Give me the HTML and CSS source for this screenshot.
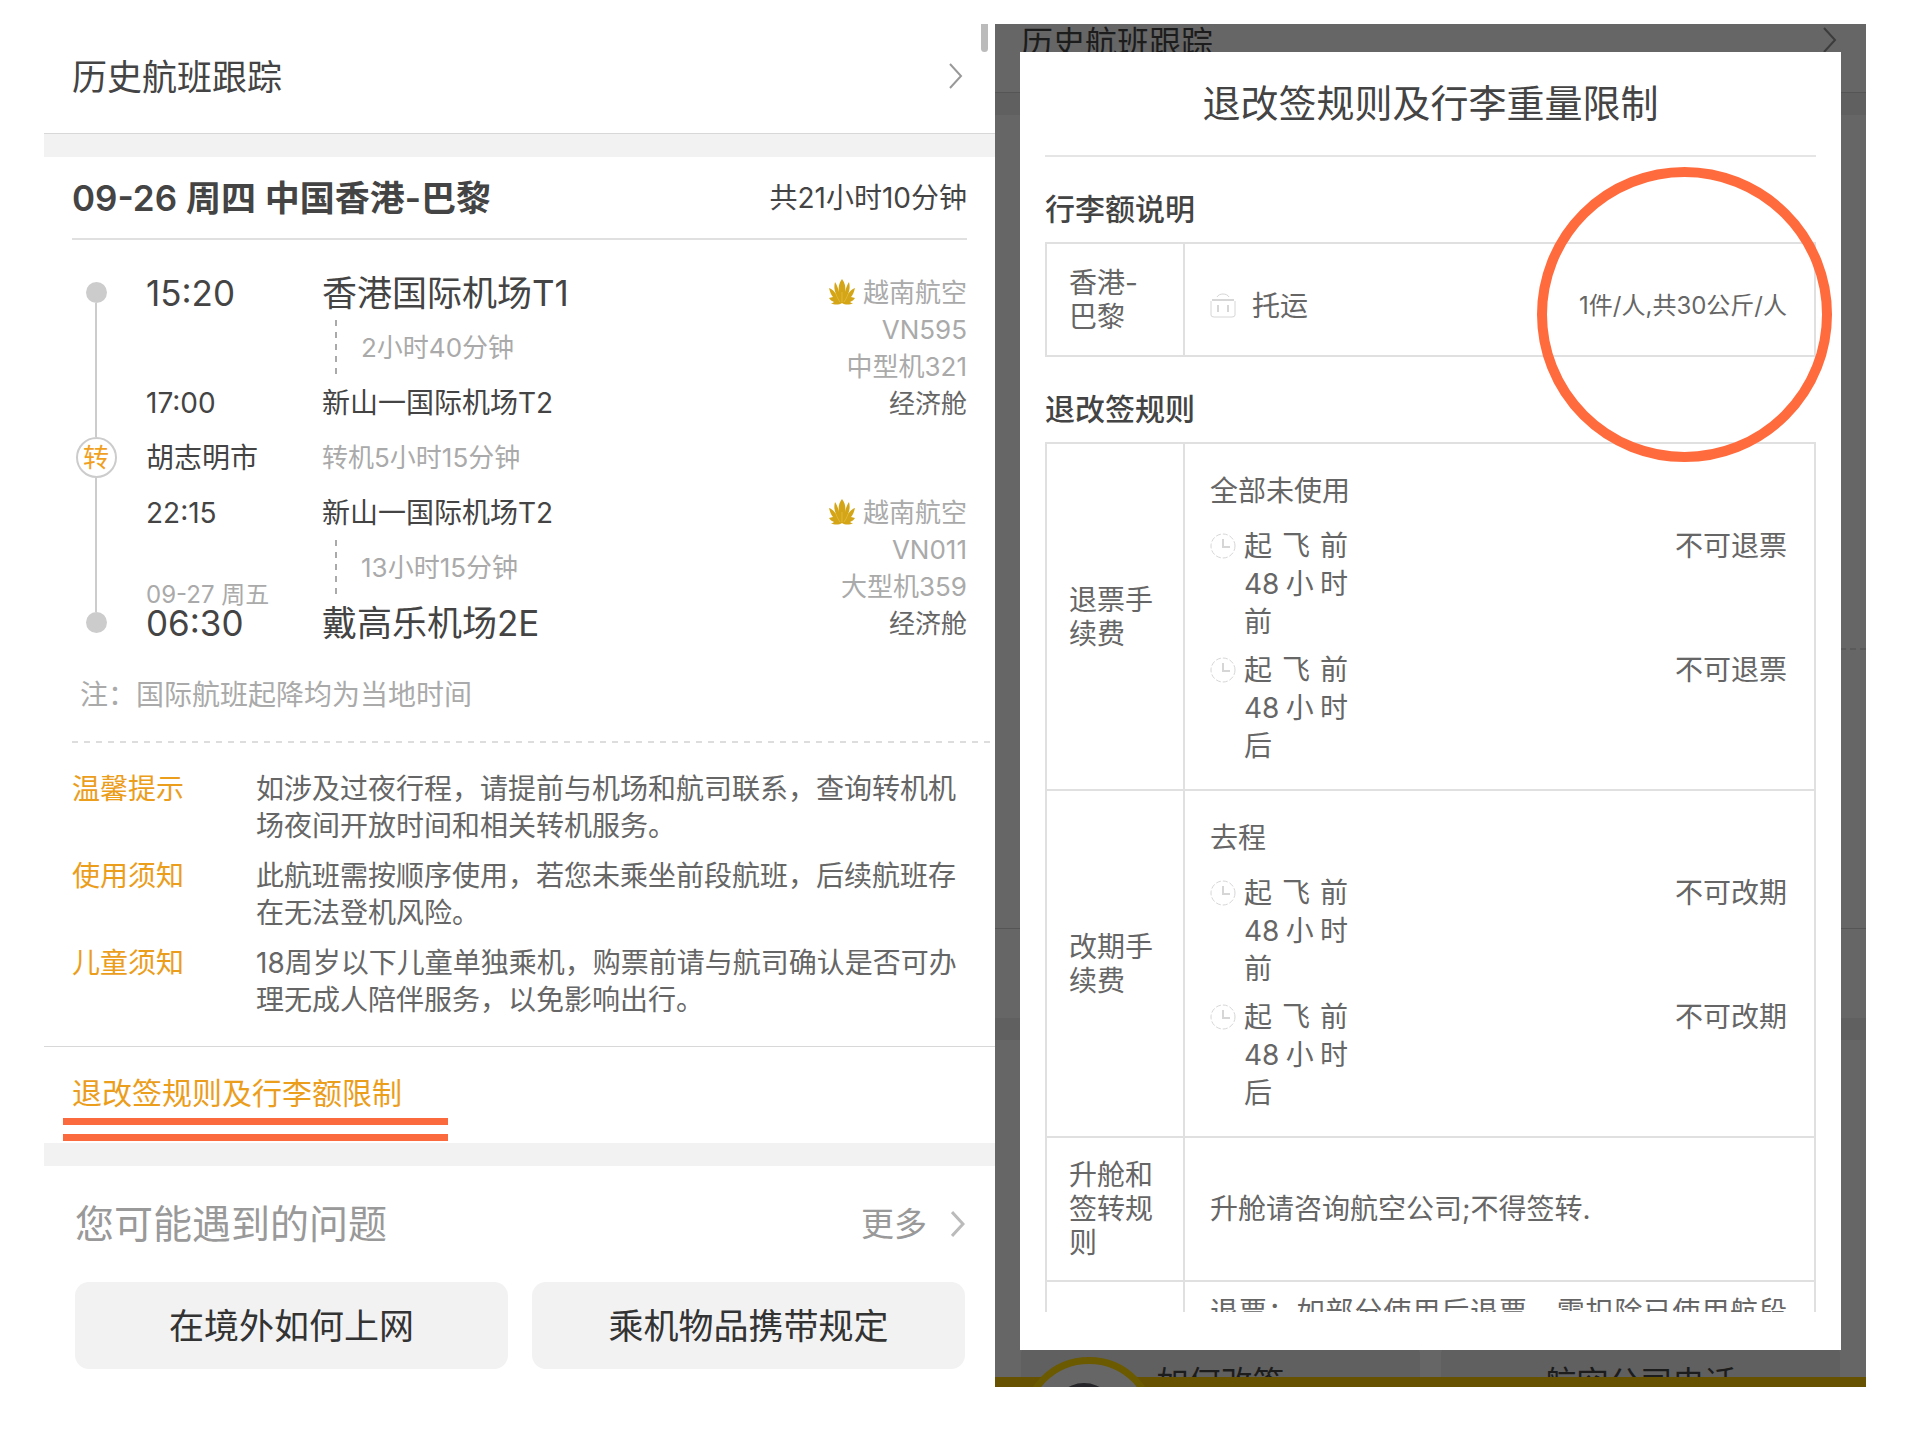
FILE: index.html
```html
<!DOCTYPE html>
<html lang="zh-CN">
<head>
<meta charset="utf-8">
<meta name="viewport" content="width=device-width, initial-scale=1">
<title>航班详情</title>
<link rel="stylesheet" href="styles.css">
</head>
<body>
<svg class="defs" aria-hidden="true">
  <symbol id="chevron" viewBox="0 0 14 26"><path d="M1 1l11 12L1 25" fill="none" stroke="currentColor"/></symbol>
  <symbol id="lotus" viewBox="0 0 26 26">
    <path fill="#d4a516" d="M13 0c3 4 4 8 3 13 1-4 2-7 4-10 1 4 1 8-1 12 2-3 4-5 7-6-1 4-2 7-4 9l4 1c-1 2-3 3-5 4 1 1 2 1 3 1-3 2-8 2-11 0-3 2-8 2-11 0 1 0 2 0 3-1-2-1-4-2-5-4l4-1C2 16 1 13 0 9c3 1 5 3 7 6C5 11 5 7 6 3c2 3 3 6 4 10C9 8 10 4 13 0z"/>
    <path fill="none" stroke="#e2b83a" stroke-width="1" d="M13 23V13M11 23c-2-3-3-5-4-8M15 23c2-3 3-5 4-8"/>
  </symbol>
  <symbol id="clock" viewBox="0 0 26 26"><g fill="none" stroke="#d6d6d6"><circle cx="13" cy="13" r="12" stroke-dasharray="5 2"/><path d="M13 6v8h7" stroke-width="2"/></g></symbol>
  <symbol id="case" viewBox="0 0 26 26"><g fill="none" stroke="#d6d6d6"><path d="M7 4c2-4 10-4 12 0"/><path d="M2 7h22" stroke-width="2"/><path d="M1 8v14q0 2 3 2h18q3 0 3-2V8"/><path d="M8 12v7M18 12v7" stroke-width="2"/></g></symbol>
</svg>

<div class="page">
  <main class="detail">
    <a class="track" href="#"><span>历史航班跟踪</span><svg class="chevron"><use href="#chevron"/></svg></a>
    <div class="band"></div>

    <header class="route">
      <h1>09-26 周四 中国香港-巴黎</h1>
      <span>共21小时10分钟</span>
    </header>

    <section class="trip">
      <div class="rail"><i class="dot"></i><i class="line"></i><b class="stop">转</b><i class="line"></i><i class="dot"></i></div>
      <time class="r1 time big">15:20</time><div class="r1 place big">香港国际机场T1</div>
      <div class="r2 leg">2小时40分钟</div>
      <time class="r3 time">17:00</time><div class="r3 place">新山一国际机场T2</div>
      <div class="r4 time">胡志明市</div><div class="r4 place wait">转机5小时15分钟</div>
      <time class="r5 time">22:15</time><div class="r5 place">新山一国际机场T2</div>
      <div class="r6 leg">13小时15分钟</div>
      <div class="r7 time big"><small>09-27 周五</small>06:30</div><div class="r7 place big">戴高乐机场2E</div>
      <ul class="flight first">
        <li><svg class="lotus"><use href="#lotus"/></svg>越南航空</li><li>VN595</li><li>中型机321</li><li class="cabin">经济舱</li>
      </ul>
      <ul class="flight second">
        <li><svg class="lotus"><use href="#lotus"/></svg>越南航空</li><li>VN011</li><li>大型机359</li><li class="cabin">经济舱</li>
      </ul>
    </section>
    <p class="remark">注：国际航班起降均为当地时间</p>
    <div class="dashes"></div>

    <dl class="notices">
      <dt>温馨提示</dt><dd>如涉及过夜行程，请提前与机场和航司联系，查询转机机场夜间开放时间和相关转机服务。</dd>
      <dt>使用须知</dt><dd>此航班需按顺序使用，若您未乘坐前段航班，后续航班存在无法登机风险。</dd>
      <dt>儿童须知</dt><dd>18周岁以下儿童单独乘机，购票前请与航司确认是否可办理无成人陪伴服务，以免影响出行。</dd>
    </dl>

    <div class="rules-row">
      <a href="#rules">退改签规则及行李额限制</a>
      <div class="mark"></div>
    </div>
    <div class="band"></div>

    <section class="faq">
      <header><h2>您可能遇到的问题</h2><a href="#">更多<svg class="chevron bold"><use href="#chevron"/></svg></a></header>
      <div class="choices"><button type="button">在境外如何上网</button><button type="button">乘机物品携带规定</button></div>
    </section>
    <div class="scrollbar"></div>
  </main>

  <div class="screen">
    <div class="behind">
      <div class="b-track"><span>历史航班跟踪</span><svg class="chevron"><use href="#chevron"/></svg></div>
      <div class="b-band"></div>
      <div class="b-trip"></div>
      <div class="b-notices"></div>
      <div class="b-link"></div>
      <div class="b-band"></div>
      <div class="b-choices"><button type="button">如何改签</button><button type="button">航空公司电话</button></div>
      <div class="b-bar"></div>
      <div class="avatar"><i></i></div>
    </div>

    <section class="dialog" id="rules" role="dialog" aria-labelledby="rules-title">
      <h2 id="rules-title">退改签规则及行李重量限制</h2>
      <div class="dialog-body">
        <h3>行李额说明</h3>
        <table>
          <tr>
            <th scope="row">香港-<br>巴黎</th>
            <td class="baggage"><div class="item"><svg class="icon"><use href="#case"/></svg><span class="kind">托运</span><span class="amount">1件/人,共30公斤/人</span></div></td>
          </tr>
        </table>
        <h3>退改签规则</h3>
        <table>
          <tr>
            <th scope="row">退票手续费</th>
            <td>
              <p class="scope">全部未使用</p>
              <div class="item"><svg class="icon"><use href="#clock"/></svg><span class="when">起飞前48小时前</span><span class="result">不可退票</span></div>
              <div class="item"><svg class="icon"><use href="#clock"/></svg><span class="when">起飞前48小时后</span><span class="result">不可退票</span></div>
            </td>
          </tr>
          <tr>
            <th scope="row">改期手续费</th>
            <td>
              <p class="scope">去程</p>
              <div class="item"><svg class="icon"><use href="#clock"/></svg><span class="when">起飞前48小时前</span><span class="result">不可改期</span></div>
              <div class="item"><svg class="icon"><use href="#clock"/></svg><span class="when">起飞前48小时后</span><span class="result">不可改期</span></div>
            </td>
          </tr>
          <tr>
            <th scope="row">升舱和签转规则</th>
            <td class="plain">升舱请咨询航空公司;不得签转.</td>
          </tr>
          <tr>
            <th></th>
            <td class="more">退票：如部分使用后退票，需扣除已使用航段</td>
          </tr>
        </table>
      </div>
      <div class="ring"></div>
    </section>
  </div>
</div>
</body>
</html>
```
FILE: styles.css
```css
* { box-sizing: border-box; }

body, h1, h2, h3, p, ul, dl, dd { margin: 0; padding: 0; }

body {
  background: #fff;
  color: #444;
  font: 28px/38px Inter, "Noto Sans CJK SC", sans-serif;
}

a { color: inherit; text-decoration: none; }
ul { list-style: none; }
button { border: 0; font: inherit; color: inherit; }

.defs { position: absolute; width: 0; height: 0; }

.page {
  display: grid;
  grid-template-columns: 951fr 871fr;
  padding: 24px 54px 52px 44px;
}

.chevron { width: 14px; height: 26px; flex: none; color: #999; stroke-width: 2px; }

/* Itinerary */
.detail { position: relative; }

.track {
  display: flex;
  justify-content: space-between;
  padding: 29px 32px 32px 28px;
  border-bottom: 1px solid #d8d8d8;
  font-size: 35px;
  line-height: 48px;
}
.track .chevron { margin-top: 10px; }

.band { height: 23px; background: #f2f2f2; }

.route {
  display: flex;
  justify-content: space-between;
  align-items: center;
  margin: 0 28px;
  height: 83px;
  border-bottom: 2px solid #e0e0e0;
}
.route h1 { font-size: 35px; font-weight: 600; }

.trip {
  display: grid;
  grid-template-columns: 74px 176px 1fr auto;
  grid-template-rows: repeat(7, 55px);
  align-items: center;
  padding: 25px 28px 0;
}
.r1 { grid-row: 1; }
.r2 { grid-row: 2; }
.r3 { grid-row: 3; }
.r4 { grid-row: 4; }
.r5 { grid-row: 5; }
.r6 { grid-row: 6; }
.r7 { grid-row: 7; }
.time { grid-column: 2; }
.place { grid-column: 3; }
.big { font-size: 35px; }
.time small {
  display: block;
  margin-top: -18px;
  font-size: 24px;
  line-height: 18px;
  color: #aaa;
}
.wait { font-size: 26px; color: #aaa; }
.leg {
  grid-column: 3;
  margin-left: 13px;
  padding-left: 26px;
  font-size: 26px;
  line-height: 55px;
  color: #aaa;
  background: repeating-linear-gradient(#aaa 0 6px, transparent 6px 12px) no-repeat 0 0 / 2px 54px;
}

.rail {
  grid-column: 1;
  grid-row: 1 / 8;
  align-self: stretch;
  width: 48px;
  display: flex;
  flex-direction: column;
  align-items: center;
  padding: 17px 0;
}
.dot { width: 21px; height: 21px; border-radius: 50%; background: #ccc; }
.line { flex: 1; width: 2px; background: #ccc; }
.stop {
  width: 41px;
  height: 41px;
  border: 2px solid #ccc;
  border-radius: 50%;
  font-size: 26px;
  font-weight: 400;
  line-height: 37px;
  text-align: center;
  color: #f0a01e;
}

.flight {
  grid-column: 4;
  align-self: start;
  padding-top: 9px;
  font-size: 26px;
  line-height: 37px;
  text-align: right;
  color: #aaa;
}
.flight li { height: 37px; }
.first { grid-row: 1 / 5; }
.second { grid-row: 5 / 8; height: 165px; }
.cabin { color: #666; }
.lotus { width: 28px; height: 26px; margin-right: 7px; vertical-align: -3px; }

.remark { padding: 26px 36px 27px; color: #aaa; }

.dashes {
  height: 2px;
  margin-left: 28px;
  background: repeating-linear-gradient(90deg, #ddd 0 6px, transparent 6px 12px);
}

.notices {
  display: grid;
  grid-template-columns: 184px 1fr;
  row-gap: 13px;
  padding: 28px 28px 27px;
  line-height: 37px;
  color: #666;
  border-bottom: 1px solid #d8d8d8;
}
.notices dt { color: #eb9d1c; }

.rules-row {
  padding: 27px 19px 2px;
  font-size: 30px;
  color: #eb9d1c;
}
.rules-row a { display: block; padding-left: 9px; }
.mark {
  width: 385px;
  height: 23px;
  margin-top: 6px;
  border: solid #fb693e;
  border-width: 7px 0;
}

.faq { padding: 31px 30px 18px 31px; }
.faq header {
  display: flex;
  justify-content: space-between;
  align-items: center;
  line-height: 54px;
  color: #999;
}
.faq h2 { font-size: 39px; font-weight: 400; }
.faq header a { display: flex; align-items: center; gap: 24px; font-size: 33px; }
.chevron.bold { color: #bbb; stroke-width: 3px; }
.choices {
  display: grid;
  grid-template-columns: 1fr 1fr;
  gap: 24px;
  margin-top: 31px;
}
.choices button {
  height: 87px;
  border-radius: 14px;
  background: #f2f2f2;
  font-size: 35px;
  color: #333;
}

.scrollbar {
  position: absolute;
  top: 0;
  right: 7px;
  width: 7px;
  height: 28px;
  border-radius: 0 0 4px 4px;
  background: #bbb;
}

/* Dimmed page under the dialog */
.screen { position: relative; background: #666; }
.behind {
  position: absolute;
  inset: 0;
  overflow: hidden;
  display: flex;
  flex-direction: column;
  font-size: 32px;
  color: #1c1c1c;
}
.behind > div { flex: none; }
.b-track {
  display: flex;
  justify-content: space-between;
  height: 69px;
  padding: 0 29px 0 26px;
  border-bottom: 1px solid #555;
}
.behind .chevron { color: #3c3c3c; margin-top: 3px; }
.b-band { height: 22px; background: #606060; }
.b-trip { height: 535px; border-bottom: 2px dashed #5a5a5a; margin-left: 26px; }
.b-notices { height: 279px; border-bottom: 1px solid #555; }
.b-link { height: 89px; }
.b-choices {
  display: grid;
  grid-template-columns: 1fr 1fr;
  gap: 21px;
  margin-top: auto;
  margin-bottom: -36px;
  padding: 0 26px;
}
.b-choices button { height: 80px; border-radius: 12px; background: #606060; }
.b-bar { position: absolute; left: 0; right: 0; bottom: 0; height: 10px; background: #665200; }
.avatar {
  position: absolute;
  left: 26px;
  bottom: -106px;
  width: 136px;
  height: 136px;
  border: 7px solid #6b5a00;
  border-radius: 50%;
  background: #666;
}
.avatar i {
  display: block;
  width: 64px;
  height: 64px;
  margin: 19px 0 0 24px;
  border-radius: 50%;
  background: #26262a;
}

/* Rules dialog */
.dialog {
  position: absolute;
  inset: 28px 25px 37px 25px;
  display: flex;
  flex-direction: column;
  padding: 0 25px 38px;
  background: #fff;
}
.dialog h2 {
  border-bottom: 2px solid #e5e5e5;
  font-size: 38px;
  font-weight: 400;
  line-height: 103px;
  text-align: center;
}
.dialog-body { flex: 1; min-height: 0; overflow: hidden; color: #666; }
.dialog h3 {
  margin: 32px 0 13px;
  font-size: 30px;
  font-weight: 500;
  line-height: 40px;
  color: #444;
}
table { width: 100%; table-layout: fixed; border-collapse: collapse; }
th, td { border: 2px solid #e0e0e0; text-align: left; vertical-align: middle; }
th {
  width: 138px;
  padding: 20px 22px;
  font-weight: 400;
  line-height: 34px;
}
td { padding: 28px 27px 24px 25px; }
.baggage { padding: 43px 27px 30px 25px; }
.plain { padding: 20px 27px 20px 25px; }
.more { padding: 11px 27px 11px 25px; text-align-last: justify; white-space: nowrap; }
.scope { margin-bottom: 17px; }
.item { display: flex; }
.item + .item { margin-top: 10px; }
.icon { width: 26px; height: 26px; margin-top: 6px; flex: none; }
.when { width: 104px; margin-left: 8px; text-align: justify; }
.kind { margin-left: 16px; }
.amount, .result { margin-left: auto; }
.amount { font-size: 24px; }

.ring {
  position: absolute;
  top: 115px;
  right: 9px;
  width: 295px;
  height: 295px;
  border: 10px solid #ff6b3d;
  border-radius: 50%;
}
```
